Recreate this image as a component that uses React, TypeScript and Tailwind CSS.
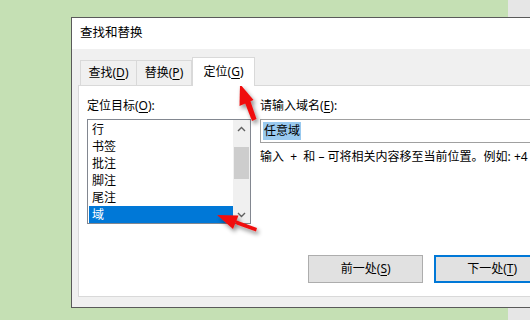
import React from "react";

const ITEMS = ["行", "书签", "批注", "脚注", "尾注", "域"];

const Key = ({ children }: { children: React.ReactNode }) => (
  <span className="underline underline-offset-2">{children}</span>
);

const Chevron = ({ up }: { up?: boolean }) => (
  <svg width="9" height="6" viewBox="0 0 9 6" className="block">
    <path
      d={up ? "M1 5 L4.5 1.5 L8 5" : "M1 1 L4.5 4.5 L8 1"}
      fill="none"
      stroke="#606060"
      strokeWidth="1.4"
    />
  </svg>
);

const Arrows = () => (
  <svg
    className="pointer-events-none absolute inset-0"
    width="530"
    height="320"
    viewBox="0 0 530 320"
  >
    <defs>
      <filter id="sh" x="-50%" y="-50%" width="200%" height="200%">
        <feDropShadow dx="2" dy="3" stdDeviation="2" floodColor="#000" floodOpacity="0.45" />
      </filter>
    </defs>
    <g filter="url(#sh)" fill="#f01010">
      {/* arrow to the tab */}
      <polygon points="240,84 239.5,106 253.5,100" />
      <polygon points="244.8,102.5 250.2,100.5 256.5,119 252,121" />
      {/* arrow to the list item */}
      <polygon points="217,215 233,229 238.5,215.5" />
      <polygon points="234,219.5 236.5,224.5 256,231.5 257,228" />
    </g>
  </svg>
);

export default function App() {
  return (
    <div className="relative h-[320px] w-[530px] overflow-hidden bg-[#c5e0b4] font-['Noto_Sans','Noto_Sans_CJK_SC',sans-serif] text-[12px] text-black">
      {/* window behind the dialog */}
      <div className="absolute right-0 top-0 h-full w-[22px] bg-[#e6e6e6]" />

      <div className="pl-[71px] pt-[17px]">
        <div className="relative flex h-[291px] w-[480px] flex-col border border-[#5a5a5a] bg-[#f0f0f0]">
          <div className="flex h-[31px] items-center bg-white pl-[8px] text-[12.5px]">
            查找和替换
          </div>

          <div className="flex flex-1 flex-col pl-[6px] pt-[8px]">
            {/* tabs */}
            <div className="relative z-10 flex h-[28px] items-end pl-[2px]">
              <div className="flex h-[25px] w-[57px] items-center justify-center border border-b-0 border-[#d9d9d9] bg-[#f0f0f0]">
                查找(<Key>D</Key>)
              </div>
              <div className="flex h-[25px] w-[55px] items-center justify-center border border-b-0 border-l-0 border-[#d9d9d9] bg-[#f0f0f0]">
                替换(<Key>P</Key>)
              </div>
              <div className="-mb-px flex h-[29px] w-[63px] items-center justify-center border border-b-0 border-[#d9d9d9] bg-white">
                定位(<Key>G</Key>)
              </div>
            </div>

            {/* panel */}
            <div className="flex h-[212px] flex-col border border-r-0 border-[#d9d9d9] bg-white pl-[8px] pt-[11px]">
              <div className="flex gap-[9px]">
                <div className="flex w-[164px] flex-col">
                  <div className="h-[18px] leading-[18px]">
                    定位目标(<Key>O</Key>):
                  </div>
                  <div className="mt-[4px] flex h-[105px] border border-[#828790] bg-white">
                    <div className="flex flex-1 flex-col pl-[1px] pt-[1px]">
                      {ITEMS.map((item) => (
                        <div
                          key={item}
                          className={`h-[17px] pl-[3px] leading-[17px] ${
                            item === "域" ? "bg-[#0078d7] text-white" : ""
                          }`}
                        >
                          {item}
                        </div>
                      ))}
                    </div>
                    <div className="flex w-[17px] flex-col items-center bg-[#f0f0f0]">
                      <div className="flex h-[17px] items-center justify-center">
                        <Chevron up />
                      </div>
                      <div className="mt-[10px] h-[32px] w-[15px] bg-[#cdcdcd]" />
                      <div className="flex-1" />
                      <div className="flex h-[17px] items-center justify-center">
                        <Chevron />
                      </div>
                    </div>
                  </div>
                </div>

                <div className="flex flex-1 flex-col">
                  <div className="h-[18px] leading-[18px]">
                    请输入域名(<Key>E</Key>):
                  </div>
                  <div className="mt-[4px] flex h-[24px] items-center border border-[#a0a0a0] pl-[2px]">
                    <span className="bg-[#99c9ef] px-[1px] leading-[18px]">任意域</span>
                  </div>
                  <div className="mt-[5px] whitespace-nowrap leading-[18px]">
                    输入 &nbsp;+ &nbsp;和 – 可将相关内容移至当前位置。例如: +4
                  </div>
                </div>
              </div>

              <div className="mt-[31px] flex gap-[11px] pl-[221px]">
                <div className="flex h-[28px] w-[125px] items-center justify-center border border-[#adadad] bg-[#e1e1e1]">
                  前一处(<Key>S</Key>)
                </div>
                <div className="flex h-[28px] w-[125px] items-center justify-center border-2 border-[#0078d7] bg-[#e1e1e1]">
                  下一处(<Key>T</Key>)
                </div>
              </div>
            </div>
          </div>
        </div>
      </div>

      <Arrows />
    </div>
  );
}
